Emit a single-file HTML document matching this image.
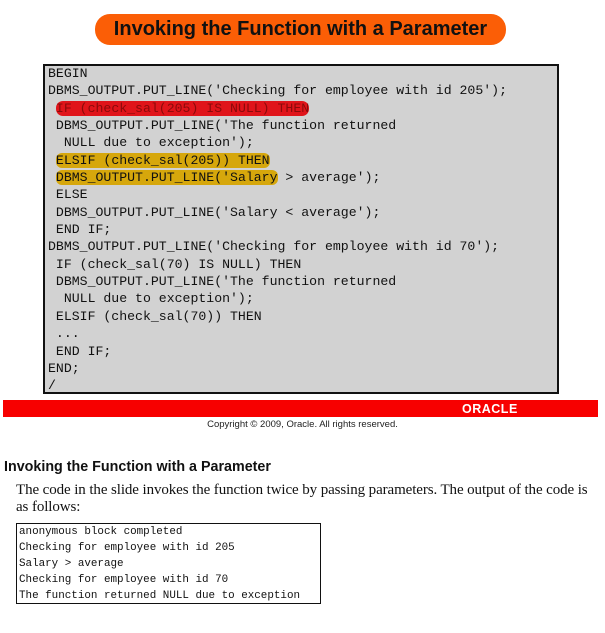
<!DOCTYPE html>
<html><head><style>
body{margin:0;width:605px;height:633px;background:#fff;position:relative;overflow:hidden;font-family:"Liberation Sans",sans-serif}
.pill{position:absolute;left:95px;top:14px;width:411px;height:31px;background:#fb5e06;border-radius:15px;text-align:center;font-weight:bold;font-size:20px;line-height:31px;color:#111}
.code{position:absolute;left:43px;top:64px;width:512px;height:326px;background:#d2d2d2;border:2px solid #111}
.code pre{margin:0;position:absolute;left:3px;top:-1px;font-family:"Liberation Mono",monospace;font-size:13.2px;line-height:17.35px;color:#111}
.r{background:#e0141a;border-radius:7px;color:#8a0a0a}
.y{background:#d6a70c;border-radius:6px}
.bar{position:absolute;left:3px;top:400px;width:595px;height:17px;background:#f70000}
.logo{position:absolute;left:462px;top:401px;color:#fff;font-weight:bold;font-size:12.5px;letter-spacing:0.5px;line-height:16px}
.copy{position:absolute;left:0;width:605px;top:419px;text-align:center;font-size:9.5px;color:#222}
h3{position:absolute;left:4px;top:459px;margin:0;font-size:14.3px;color:#111}
.p{position:absolute;left:16px;top:482px;width:589px;font-family:"Liberation Serif",serif;font-size:15px;line-height:17px;color:#111;letter-spacing:-0.1px}
.out{position:absolute;left:16px;top:523px;width:303px;height:79px;border:1px solid #111}
.out pre{margin:0;position:absolute;left:2px;top:0;font-family:"Liberation Mono",monospace;font-size:10.9px;line-height:16px;color:#111}
</style></head><body>
<div class="pill">Invoking the Function with a Parameter</div>
<div class="code"><pre>BEGIN
DBMS_OUTPUT.PUT_LINE('Checking for employee with id 205');
 <span class="r">IF (check_sal(205) IS NULL) THEN</span>
 DBMS_OUTPUT.PUT_LINE('The function returned
  NULL due to exception');
 <span class="y">ELSIF (check_sal(205)) THEN</span>
 <span class="y">DBMS_OUTPUT.PUT_LINE('Salary</span> &gt; average');
 ELSE
 DBMS_OUTPUT.PUT_LINE('Salary &lt; average');
 END IF;
DBMS_OUTPUT.PUT_LINE('Checking for employee with id 70');
 IF (check_sal(70) IS NULL) THEN
 DBMS_OUTPUT.PUT_LINE('The function returned
  NULL due to exception');
 ELSIF (check_sal(70)) THEN
 ...
 END IF;
END;
/</pre></div>
<div class="bar"></div>
<div class="logo">ORACLE</div>
<div class="copy">Copyright © 2009, Oracle. All rights reserved.</div>
<h3>Invoking the Function with a Parameter</h3>
<div class="p">The code in the slide invokes the function twice by passing parameters. The output of the code is<br>as follows:</div>
<div class="out"><pre>anonymous block completed
Checking for employee with id 205
Salary &gt; average
Checking for employee with id 70
The function returned NULL due to exception</pre></div>
</body></html>
